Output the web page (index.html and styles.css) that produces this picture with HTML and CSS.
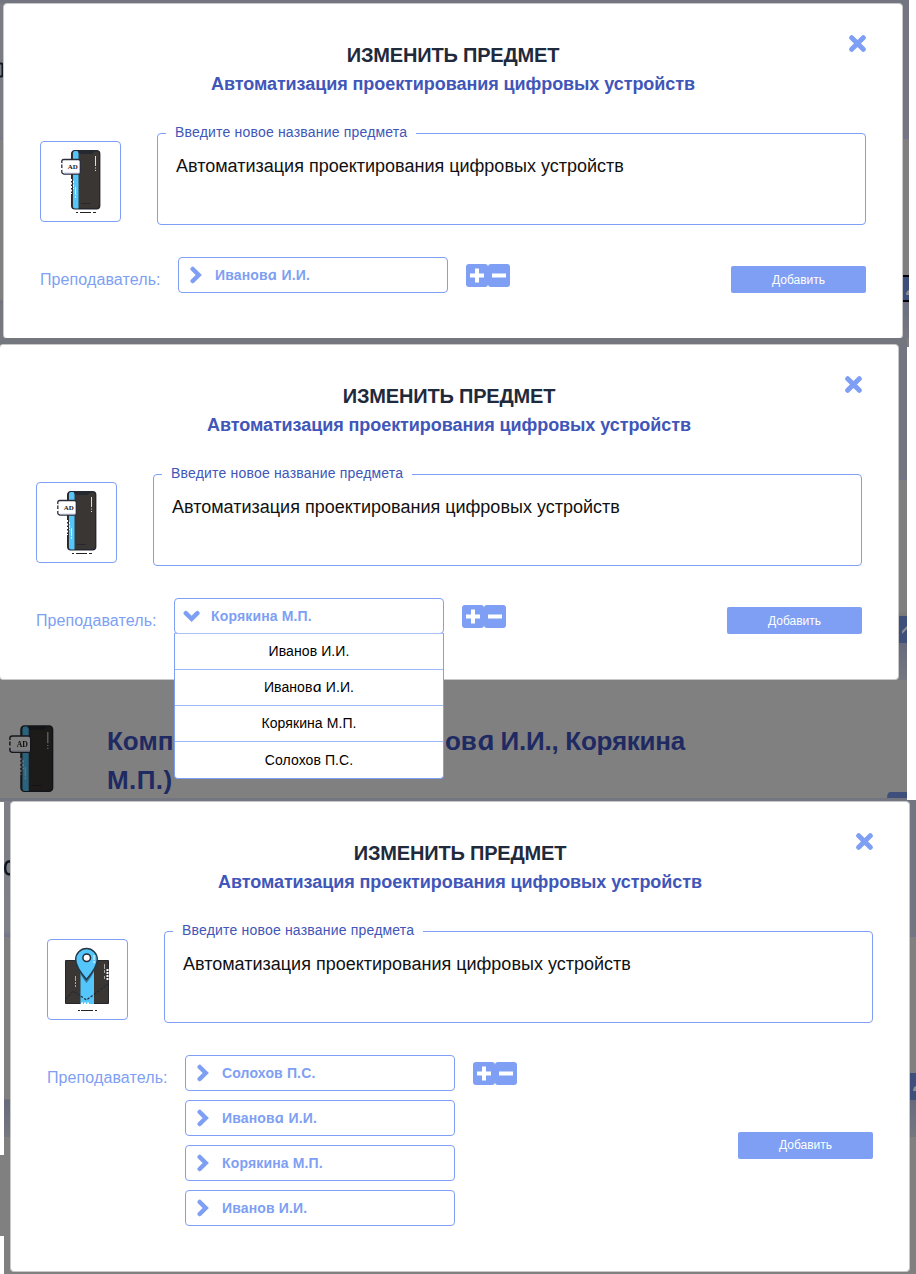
FILE: index.html
```html
<!DOCTYPE html>
<html lang="ru">
<head>
<meta charset="utf-8">
<title>Изменить предмет</title>
<link rel="stylesheet" href="styles.css">
</head>
<body>
<svg width="40" height="60" class="defs">
  <symbol id="close" viewBox="0 0 17 17"><path d="M2.700 2.700l11.600 11.600M14.300 2.700L2.700 14.300" stroke="#7e9ff3" stroke-width="5" stroke-linecap="round"/></symbol>
  <symbol id="right" viewBox="0 0 16 18"><path d="M3.700 3l6 6-6 6" fill="none" stroke="#7e9ff3" stroke-width="4.500" stroke-linecap="round"/></symbol>
  <symbol id="down" viewBox="0 0 18 18"><path d="M2.800 6.200l5.800 5.600 5.800-5.600" fill="none" stroke="#7e9ff3" stroke-width="4.500" stroke-linecap="round"/></symbol>
  <symbol id="plus" viewBox="0 0 22 23"><rect width="22" height="23" rx="3" fill="#7e9ff3"/><path d="M4 11.500h14M11 4.500v14" stroke="#fff" stroke-width="4"/></symbol>
  <symbol id="minus" viewBox="0 0 22 23"><rect width="22" height="23" rx="3" fill="#7e9ff3"/><path d="M4 11.500h14" stroke="#fff" stroke-width="4"/></symbol>
  <symbol id="phone" viewBox="0 0 40 60">
    <rect x="10.700" y=".7" width="28" height="58" rx="3" fill="#393633" stroke="#252831" stroke-width="1.400"/>
    <path d="M12 3q0-2 2-2h3.500v57.500H14q-2 0-2-2z" fill="#55c6fb"/>
    <path d="M17 1.500h16l-2 2H19zM20 53.500h9" fill="#252831" stroke="#252831"/>
    <path d="M34.500 6v10M34.500 17.500v1M34.500 20v1" stroke="#ddd"/>
    <path d="M14.500 37v11" stroke="#c8eeff" stroke-dasharray="8 1 2 1"/>
    <path d="M10.500 29v15M12.500 31v8" stroke="#fff" stroke-dasharray="2 1.500"/>
    <rect x=".8" y="9.500" width="18.500" height="14.500" rx="2" fill="#fff" stroke="#2b2e3a" stroke-width="1.300"/>
    <path d="M.8 13v1.500M.8 18v2" stroke="#fff" stroke-width="2"/>
    <path d="M3 23h15.500" stroke="#cfd3f2"/>
    <text x="6.800" y="19.300" class="ad" textLength="10" lengthAdjust="spacingAndGlyphs">AD</text>
  </symbol>
  <symbol id="map" viewBox="0 0 44 66">
    <path d="M.5 13.500h43v43H.5z" fill="#393633" stroke="#26272b"/>
    <path d="M15.500 14h13.500v43H15.500z" fill="#55c6fb"/>
    <path d="M1 52l7-8 13.500 9L43 37" fill="none" stroke="#202a36" stroke-width="1.200" stroke-dasharray="2.500 1.500"/>
    <path d="M21.500 36C15 28 11 19 11 13a10.700 10.700 0 0 1 21.400 0c0 6-4.400 15-10.900 23z" fill="#24566e" opacity=".7"/>
    <path d="M21.500 32.500C14 24 10.700 17 10.700 12.300a10.800 10.800 0 0 1 21.600 0c0 4.700-3.300 11.700-10.800 20.200z" fill="#55c6fb" stroke="#243745" stroke-width="1.400"/>
    <circle cx="21.700" cy="10.700" r="3.800" fill="#fff" stroke="#252b38" stroke-width="1.500"/>
    <path d="M29 8v5M29 14v2" stroke="#fff"/>
    <path d="M10.500 29v8M10.500 38v2M39.500 17v9M39.500 29v3" stroke="#aaa" stroke-dasharray="5 1"/>
    <path d="M42.500 22v11M16 56.500h9" stroke="#fff" stroke-width="2" stroke-dasharray="2 1"/>
    <path d="M13 63.500h2M16 63.500h12M30 63.500h2" stroke="#252525"/>
  </symbol>
</svg>

<section class="shot shot-first">
  <div class="edge edge-left"><svg width="3" height="16" class="peek"><path d="M0 1.500h1.500q1 0 1 2v9q0 2-1 2H0" fill="none" stroke="#111722" stroke-width="2"/></svg></div>
  <div class="modal">
    <button class="close"><svg width="17" height="17"><use href="#close"/></svg></button>
    <h1>ИЗМЕНИТЬ ПРЕДМЕТ</h1>
    <h2>Автоматизация проектирования цифровых устройств</h2>
    <div class="subject">
      <div class="picture"><svg width="40" height="60"><use href="#phone"/></svg><i class="shadow"></i></div>
      <fieldset><legend>Введите новое название предмета</legend><p>Автоматизация проектирования цифровых устройств</p></fieldset>
    </div>
    <div class="teachers">
      <label>Преподаватель:</label>
      <div class="stack">
        <div class="select"><svg width="16" height="18"><use href="#right"/></svg><b>Иванов<i class="a">a</i> И.И.</b></div>
      </div>
      <div class="counter"><svg width="22" height="23"><use href="#plus"/></svg><svg width="22" height="23"><use href="#minus"/></svg></div>
      <button class="add">Добавить</button>
    </div>
  </div>
  <div class="edge edge-right"><div class="sliver"><svg width="6" height="25"><path d="M3 18q0-4 3-5v5z" fill="#8f8f8f"/></svg></div></div>
</section>

<section class="shot shot-second">
  <div class="screen">
    <div class="modal">
      <button class="close"><svg width="17" height="17"><use href="#close"/></svg></button>
      <h1>ИЗМЕНИТЬ ПРЕДМЕТ</h1>
      <h2>Автоматизация проектирования цифровых устройств</h2>
      <div class="subject">
        <div class="picture"><svg width="40" height="60"><use href="#phone"/></svg><i class="shadow"></i></div>
        <fieldset><legend>Введите новое название предмета</legend><p>Автоматизация проектирования цифровых устройств</p></fieldset>
      </div>
      <div class="teachers">
        <label>Преподаватель:</label>
        <div class="stack">
          <div class="select open"><svg width="18" height="18"><use href="#down"/></svg><b>Корякина М.П.</b></div>
          <ul class="menu">
            <li>Иванов И.И.</li>
            <li>Иванов<i class="a">a</i> И.И.</li>
            <li>Корякина М.П.</li>
            <li>Солохов П.С.</li>
          </ul>
        </div>
        <div class="counter"><svg width="22" height="23"><use href="#plus"/></svg><svg width="22" height="23"><use href="#minus"/></svg></div>
        <button class="add">Добавить</button>
      </div>
    </div>
    <div class="edge edge-right"><svg width="8" height="27"><path d="M3 18v-3l5-5v3z" fill="#8f8f8f"/></svg></div>
  </div>
  <div class="behind">
    <svg width="45" height="68" class="dim"><use href="#phone"/></svg>
    <div class="course"><div class="line"><span class="head">Комп</span><span class="tail">ов<i class="a">a</i> И.И., Корякина</span></div><div class="second">М.П.)</div></div>
    <i class="chip"></i>
  </div>
</section>

<section class="shot shot-third">
  <div class="margin"></div>
  <div class="edge edge-left"><svg width="6" height="16" class="peek"><path d="M6 1.500H4.500Q1.200 2.500 1.200 8t3.300 6.300H6" fill="none" stroke="#111722" stroke-width="2.500"/></svg></div>
  <div class="modal">
    <button class="close"><svg width="17" height="17"><use href="#close"/></svg></button>
    <h1>ИЗМЕНИТЬ ПРЕДМЕТ</h1>
    <h2>Автоматизация проектирования цифровых устройств</h2>
    <div class="subject">
      <div class="picture picture-map"><svg width="44" height="66"><use href="#map"/></svg></div>
      <fieldset><legend>Введите новое название предмета</legend><p>Автоматизация проектирования цифровых устройств</p></fieldset>
    </div>
    <div class="teachers">
      <label>Преподаватель:</label>
      <div class="stack">
        <div class="select"><svg width="16" height="18"><use href="#right"/></svg><b>Солохов П.С.</b></div>
        <div class="select"><svg width="16" height="18"><use href="#right"/></svg><b>Иванов<i class="a">a</i> И.И.</b></div>
        <div class="select"><svg width="16" height="18"><use href="#right"/></svg><b>Корякина М.П.</b></div>
        <div class="select"><svg width="16" height="18"><use href="#right"/></svg><b>Иванов И.И.</b></div>
      </div>
      <div class="counter"><svg width="22" height="23"><use href="#plus"/></svg><svg width="22" height="23"><use href="#minus"/></svg></div>
      <button class="add">Добавить</button>
    </div>
  </div>
  <div class="edge edge-right"><svg width="6" height="27"><path d="M3 18q0-4 3-5v5z" fill="#8f8f8f"/></svg></div>
</section>
</body>
</html>
```
FILE: styles.css
```css
* { box-sizing: border-box; }
body { margin: 0; width: 916px; height: 1274px; overflow: hidden; background: #fff; font-family: "Liberation Sans", Arial, sans-serif; }
.defs { position: absolute; }
svg { display: block; flex: none; }
.ad { font: bold 7px "Liberation Serif", serif; fill: #222; }

.shot { display: flex; }
.edge { flex: none; }

.shot-first { width: 909px; height: 347px; padding-top: 3px; background: linear-gradient(#737680 339px, #808080 339px); }
.shot-first .edge-left { width: 3px; height: 336px; padding-top: 59px; background: linear-gradient(#7a7b83 134px, #75768a 136px, #808080 137px 297px, #70727f 298px, #77787f 304px); }
.shot-first .edge-right { width: 6px; height: 344px; padding-top: 272px; background: linear-gradient(#737680 131px, #73738a 136px, #808080 136px 272px, #6b6f80 299px, #757780 335px, #808080 335px); }
.sliver { height: 27px; border: solid #000; border-width: 2px 0; background: #3f4f7c; }

.shot-second { flex-direction: column; position: relative; z-index: 1; width: 907px; height: 462px; margin-top: -9px; padding-top: 6px; background: #808080 linear-gradient(#75777f, #75777f) 0 0 / 100% 30px no-repeat; }
.screen { display: flex; height: 336px; }
.shot-second .modal { margin-left: -1px; }
.shot-second .edge-right { width: 8px; padding-top: 272px; background: linear-gradient(#737680 131px, #73738a 136px, #808080 136px 266px, #777 272px, #3f4f7c 272px 299px, #666a7c 299px, #757780 336px); }
.behind { display: flex; height: 120px; padding: 45px 0 0 9px; border-bottom: 2px solid #737680; position: relative; }
.dim { filter: brightness(.5); }
.course { margin: -3px 0 0 53px; font-size: 26px; font-weight: bold; line-height: 39px; color: #1f2a62; white-space: nowrap; }
.line { display: flex; }
.head { width: 338px; }
.tail { letter-spacing: -.25px; }
.second { letter-spacing: .4px; }
.chip { position: absolute; right: 0; bottom: 0; width: 20px; height: 6px; background: #3f4f7c; border-top-left-radius: 3px 6px; }

.shot-third { height: 474px; padding-top: 1px; position: relative; background: linear-gradient(#737680 2px, #808080 2px); }
.margin { width: 4px; height: 473px; background: linear-gradient(#808080 1px, #fff 1px 354px, #808080 354px 435px, #fff 435px); }
.shot-third .edge-left { width: 6px; padding-top: 59px; background: linear-gradient(#7d7e86 70px, #80808a 130px, #73738a 136px, #808080 136px 298px, #666a7c 299px, #757780 336px, #808080 336px); }
.shot-third .edge-right { width: 6px; padding-top: 272px; background: linear-gradient(#737680 131px, #73738a 136px, #808080 136px 272px, #3f4f7c 272px 299px, #666a7c 299px, #757780 336px, #808080 336px); }
.shot-third .modal { height: 471px; }

.modal { position: relative; flex: none; width: 900px; height: 336px; padding: 39px 36px 0; border: 1px solid #c8c8c8; border-radius: 4px; background: #fff; }
.close { position: absolute; top: 31px; right: 36px; padding: 0; border: 0; background: none; }
h1 { margin: 0; font-size: 20px; line-height: 24px; text-align: center; letter-spacing: -.18px; color: #1f2a3c; }
h2 { margin: 5px 0 0; font-size: 18px; line-height: 24px; text-align: center; letter-spacing: -.07px; color: #4056b8; }
.subject { display: flex; gap: 36px; margin-top: 28px; height: 101px; }
.picture { width: 81px; height: 81px; margin-top: 17px; padding: 8px 0 0 20px; border: 1px solid #7e9ff3; border-radius: 4px; }
.picture-map { padding: 7px 0 0 17px; }
.shadow { display: block; width: 20px; height: 1px; margin: 2px 0 0 15px; background: linear-gradient(90deg, #222 2px, #fff 2px 4px, #222 4px 15px, #fff 15px 17px, #222 17px); }
fieldset { width: 709px; height: 101px; margin: 0; padding: 0 18px; border: 1px solid #7e9ff3; border-radius: 4px; min-width: 0; }
legend { margin-left: -10px; padding: 0 9px 2px; font-size: 14px; line-height: 16px; letter-spacing: .19px; color: #4056b8; }
fieldset p { margin: 14px 0 0; font-size: 18px; line-height: 20px; color: #111; white-space: nowrap; }
.teachers { display: flex; margin-top: 32px; align-items: flex-start; }
label { width: 138px; padding-top: 13px; font-size: 16px; line-height: 20px; letter-spacing: .1px; color: #7e9ff3; }
.stack { position: relative; width: 270px; }
.select { display: flex; align-items: center; height: 36px; margin-bottom: 9px; padding-left: 10px; gap: 10px; border: 1px solid #7e9ff3; border-radius: 4px; font-size: 14px; letter-spacing: .15px; color: #7e9ff3; }
.open { padding-left: 8px; }
.counter { display: flex; margin: 6.500px 0 0 18px; }
.add { align-self: center; margin-left: auto; width: 135px; height: 27px; padding: 0; border: 0; border-radius: 2px; background: #7e9ff3; color: #fff; font: 12px "Liberation Sans", Arial, sans-serif; }
.a { display: inline-block; font-family: Lato, sans-serif; font-size: 1.12em; font-style: italic; line-height: .8; transform: skewX(9deg) scaleX(1.1); margin: 0 .04em; }
.menu { position: absolute; z-index: 2; top: 35px; left: 0; width: 270px; height: 146px; margin: 0; padding: 0; list-style: none; border: 1px solid #7e9ff3; border-top-color: #a9c0f9; border-radius: 0 0 4px 4px; background: #fff; }
.menu li { height: 36px; line-height: 34px; text-align: center; font-size: 14px; letter-spacing: .08px; color: #000; border-bottom: 1px solid #9fb8f8; }
.menu li:last-child { border: 0; line-height: 37px; }
```
